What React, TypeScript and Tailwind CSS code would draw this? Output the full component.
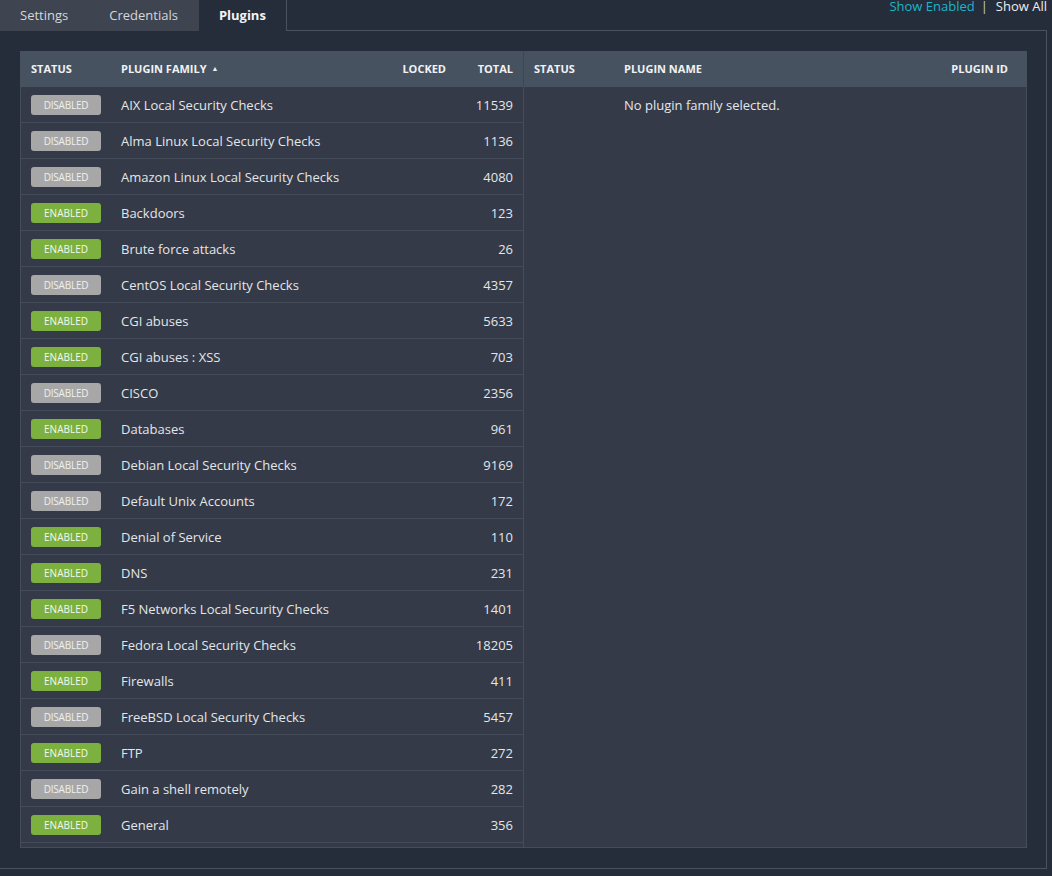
import React from "react";

type Row = { name: string; enabled: boolean; total: number };

const rows: Row[] = [
  { name: "AIX Local Security Checks", enabled: false, total: 11539 },
  { name: "Alma Linux Local Security Checks", enabled: false, total: 1136 },
  { name: "Amazon Linux Local Security Checks", enabled: false, total: 4080 },
  { name: "Backdoors", enabled: true, total: 123 },
  { name: "Brute force attacks", enabled: true, total: 26 },
  { name: "CentOS Local Security Checks", enabled: false, total: 4357 },
  { name: "CGI abuses", enabled: true, total: 5633 },
  { name: "CGI abuses : XSS", enabled: true, total: 703 },
  { name: "CISCO", enabled: false, total: 2356 },
  { name: "Databases", enabled: true, total: 961 },
  { name: "Debian Local Security Checks", enabled: false, total: 9169 },
  { name: "Default Unix Accounts", enabled: false, total: 172 },
  { name: "Denial of Service", enabled: true, total: 110 },
  { name: "DNS", enabled: true, total: 231 },
  { name: "F5 Networks Local Security Checks", enabled: true, total: 1401 },
  { name: "Fedora Local Security Checks", enabled: false, total: 18205 },
  { name: "Firewalls", enabled: true, total: 411 },
  { name: "FreeBSD Local Security Checks", enabled: false, total: 5457 },
  { name: "FTP", enabled: true, total: 272 },
  { name: "Gain a shell remotely", enabled: false, total: 282 },
  { name: "General", enabled: true, total: 356 },
  { name: "Gentoo Local Security Checks", enabled: false, total: 3184 },
];

function Badge({ enabled }: { enabled: boolean }) {
  return enabled ? (
    <span className="flex h-[20px] w-[70px] items-center justify-center rounded-[3px] bg-[#7db13f] text-[10px] leading-none text-[#f4f8ee]">
      ENABLED
    </span>
  ) : (
    <span className="flex h-[20px] w-[70px] items-center justify-center rounded-[3px] bg-[#a7a7a7] text-[10px] leading-none tracking-[-0.2px] text-[#f0f0f0]">
      DISABLED
    </span>
  );
}

export default function App() {
  return (
    <div
      className="min-h-screen w-full bg-[#252c3a] text-[13px] text-[#e3e6ea]"
      style={{ fontFamily: '"Open Sans", "Noto Sans", sans-serif' }}
    >
      {/* tab bar */}
      <div className="flex h-[31px] w-[1047px]">
        <div className="flex h-full items-center bg-[#3f4550] pl-[20px] pr-[21px] text-[#d4d7dc]">
          Settings
        </div>
        <div className="flex h-full items-center bg-[#3f4550] pl-[20px] pr-[21px] text-[#d4d7dc]">
          Credentials
        </div>
        <div className="flex h-full items-center border-r border-[#4b525e] px-[20px] font-bold text-[#f2f3f5]">
          Plugins
        </div>
        <div className="flex h-full flex-1 items-start justify-end border-b border-[#4b525e]">
          <div className="flex leading-[13px]">
            <span className="text-[#1db4c8]">Show Enabled</span>
            <span className="ml-[6px] mr-[8px] text-[#c9ccd1]">|</span>
            <span className="text-[#eceef1]">Show All</span>
          </div>
        </div>
      </div>

      {/* panel */}
      <div className="w-[1047px] border-b border-r border-[#4b525e] pb-[20px] pl-[20px] pr-[19px] pt-[20px]">
        <div className="flex h-[797px] w-[1007px] flex-col border border-t-0 border-[#464d5a] bg-[#343a47]">
          {/* header */}
          <div className="-mx-px flex h-[36px] shrink-0 bg-[#475261] text-[11px] font-bold text-[#f1f2f4]">
            <div className="flex w-[504px] items-center border-r border-[#3d4654]">
              <div className="w-[101px] pl-[11px]">STATUS</div>
              <div className="flex flex-1 items-center">
                PLUGIN FAMILY
                <span className="ml-[5px] text-[7px]">▲</span>
              </div>
              <div className="w-[70px] pr-[10px] text-right">LOCKED</div>
              <div className="w-[67px] pr-[10px] text-right">TOTAL</div>
            </div>
            <div className="flex flex-1 items-center">
              <div className="w-[100px] pl-[10px]">STATUS</div>
              <div className="flex-1">PLUGIN NAME</div>
              <div className="pr-[19px] text-right">PLUGIN ID</div>
            </div>
          </div>
          {/* body */}
          <div className="flex min-h-0 flex-1">
            <div className="w-[503px] overflow-hidden border-r border-[#464d5a]">
              {rows.map((r) => (
                <div
                  key={r.name}
                  className="flex h-[36px] items-center border-b border-[#454c59]"
                >
                  <div className="w-[100px] pl-[10px]">
                    <Badge enabled={r.enabled} />
                  </div>
                  <div className="flex-1 pt-[2px]">{r.name}</div>
                  <div className="w-[70px]" />
                  <div className="w-[67px] pr-[10px] pt-[2px] text-right">{r.total}</div>
                </div>
              ))}
            </div>
            <div className="flex-1">
              <div className="flex h-[36px] items-center">
                <div className="w-[100px]" />
                <div className="pt-[2px]">No plugin family selected.</div>
              </div>
            </div>
          </div>
        </div>
      </div>
    </div>
  );
}
